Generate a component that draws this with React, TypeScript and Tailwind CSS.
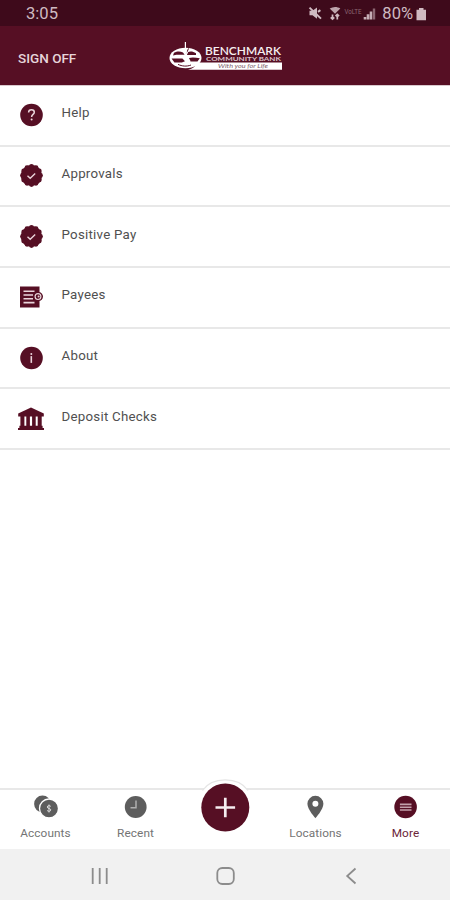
import type { ReactNode } from "react";

const MAROON = "#560f24";

function HelpIcon() {
  return (
    <svg width="28" height="28" viewBox="0 0 28 28" fill="none">
      <circle cx="14.5" cy="14" r="11.3" fill={MAROON} />
      <path d="M11.6 11.4c0-1.8 1.2-2.7 2.9-2.7s2.8 1 2.8 2.5c0 2.2-2.7 2.2-2.7 4.7" stroke="#ead5db" strokeWidth="1.5" />
      <circle cx="14.6" cy="18.4" r="1" fill="#ead5db" />
    </svg>
  );
}

function SealIcon() {
  // round badge with twelve bumps
  const bumps = Array.from({ length: 12 }, (_, i) => (i * Math.PI) / 6);
  return (
    <svg width="28" height="28" viewBox="0 0 28 28" fill="none">
      <circle cx="14.5" cy="13.5" r="10.6" fill={MAROON} />
      {bumps.map((a) => (
        <circle key={a} cx={14.5 + 9 * Math.sin(a)} cy={13.5 - 9 * Math.cos(a)} r="2.4" fill={MAROON} />
      ))}
      <path d="M10.5 13.7l2.7 2.5 5-4.8" stroke="#ead5db" strokeWidth="1.4" />
    </svg>
  );
}

function PayeesIcon() {
  return (
    <svg width="28" height="28" viewBox="0 0 28 28" fill="none">
      <path d="M3 3.5h19.5v21H3z" fill={MAROON} />
      <path d="M6.5 8.2h11M6.5 12h9.5M6.5 15.8h9.5M6.5 19.6h11" stroke="#ead5db" strokeWidth="1.6" />
      <circle cx="21.5" cy="13.6" r="4.5" fill={MAROON} />
      <circle cx="21" cy="13.6" r="2.9" stroke="#ead5db" strokeWidth="1.2" />
      <circle cx="21.6" cy="13.6" r="1" fill="#ead5db" />
    </svg>
  );
}

function AboutIcon() {
  return (
    <svg width="28" height="28" viewBox="0 0 28 28" fill="none">
      <circle cx="14.5" cy="14" r="11.3" fill={MAROON} />
      <circle cx="14.3" cy="10.1" r="1" fill="#ead5db" />
      <path d="M14.3 12.1v6.8" stroke="#ead5db" strokeWidth="1.6" />
    </svg>
  );
}

function BankIcon() {
  return (
    <svg width="28" height="28" viewBox="0 0 28 28" fill={MAROON}>
      <path d="M14 2.6L26.8 8.6v2.9H1.2V8.6z" />
      <path d="M3.4 11h4v10.5h-4zM9.3 11h3.6v10.5H9.3zM15.1 11h3.6v10.5h-3.6zM20.7 11h4v10.5h-4z" />
      <path d="M2.4 20.8h23.2V25H2.4zM1 23h26v2H1z" />
    </svg>
  );
}

function Logo() {
  return (
    <svg width="118" height="32" viewBox="0 0 118 32" fill="none">
      <ellipse cx="19.500" cy="18" rx="16" ry="10.300" fill="#fff" />
      <path d="M8 12.8c3.500-1.800 6.500-1.200 9-.4l1.600 2.400h-8.200L7 15.600zM21.500 12.200c3-1.300 5.500-.8 8.500 1V15h-9zM5.600 18.400h10.800l2.600 2.800-3.200 1.400H8.400zM23 18c3.500-1.200 7-.3 10.800.2l-2.300 3.200h-7z" fill={MAROON} />
      <path d="M12 24.400c4 1.800 8.500 2.400 13 .6M22.500 8.400l-2.200 5.400" stroke={MAROON} strokeWidth="1" />
      <path d="M19.400 2v9.500M15.800 9l5.500 3.500-2.600 4.600 5.300 4" stroke="#fff" strokeWidth="1.200" />
      <text x="39" y="14.800" textLength="76" lengthAdjust="spacingAndGlyphs" fill="#f7eff1" fontFamily="Lato, sans-serif" fontWeight="600" fontSize="11.500">BENCHMARK</text>
      <text x="40" y="21.400" textLength="75" lengthAdjust="spacingAndGlyphs" fill="#dcc5cc" fontFamily="Lato, sans-serif" fontWeight="700" fontSize="6">COMMUNITY BANK</text>
      <path d="M31 22.400h85v7.300H22c5-1.200 7.500-3.300 9-7.300z" fill="#fff" />
      <text x="52" y="28.300" textLength="50" lengthAdjust="spacingAndGlyphs" fill="#80606b" fontFamily="Lato, sans-serif" fontStyle="italic" fontSize="5.600">With you for Life</text>
    </svg>
  );
}

function StatusIcons() {
  return (
    <svg width="72" height="18" viewBox="0 0 72 18" fill="none">
      <path d="M2.500 6.800h3L10 3.500v11.200l-4.500-3.400h-3z" fill="#d0bac1" />
      <path d="M2.500 3.600l11.500 11M11 7.800l2.400-1.600" stroke="#d0bac1" strokeWidth="2" />
      <path d="M22.700 4.400c3.500-2 7.400-2 10.600 0L28 9.800z" fill="#bda4ac" />
      <path d="M25.500 15.500v-5M23.700 13.300l1.800 1.700 1.800-1.700M30.300 10.400v5M28.500 12.200l1.800-1.700 1.800 1.700" stroke="#d0bac1" strokeWidth="1.700" />
      <text x="37.500" y="9.600" textLength="17" lengthAdjust="spacingAndGlyphs" fill="#8c6672" fontFamily="Roboto, sans-serif" fontSize="7.500">VoLTE</text>
      <path d="M56.700 15.500v-2.600h2.600v2.600zM59.700 15.500v-5.200h2.600v5.200zM62.700 15.500v-8h2.600v8z" fill="#c5adb5" />
      <path d="M65.800 15.500v-11h2.400v11z" fill="#8c6672" />
    </svg>
  );
}

interface MenuItem {
  label: string;
  icon: ReactNode;
}

const menu: MenuItem[] = [
  { label: "Help", icon: <HelpIcon /> },
  { label: "Approvals", icon: <SealIcon /> },
  { label: "Positive Pay", icon: <SealIcon /> },
  { label: "Payees", icon: <PayeesIcon /> },
  { label: "About", icon: <AboutIcon /> },
  { label: "Deposit Checks", icon: <BankIcon /> },
];

function AccountsIcon() {
  return (
    <svg width="28" height="26" viewBox="0 0 28 26" fill="none">
      <circle cx="11.500" cy="10" r="8.400" fill="#5d5d5d" />
      <circle cx="18" cy="14.500" r="9.500" fill="#5d5d5d" stroke="#fff" strokeWidth="1.300" />
      <path d="M19.800 12.400c-1-1.100-3.500-1-3.500.6 0 2 3.500 1.100 3.500 2.900 0 1.600-2.600 1.800-3.700.6M18 10.500v8" stroke="#dcdcdc" strokeWidth="1" />
    </svg>
  );
}

function RecentIcon() {
  return (
    <svg width="28" height="26" viewBox="0 0 28 26" fill="none">
      <circle cx="14.700" cy="13" r="10.900" fill="#5d5d5d" />
      <path d="M15 6.500v7.200H9.500" stroke="#b0b0b0" strokeWidth="1.500" />
    </svg>
  );
}

function PinIcon() {
  return (
    <svg width="28" height="26" viewBox="0 0 28 26">
      <path fillRule="evenodd" d="M14.400 1.800a8 8 0 0 0-8 8c0 5.800 8 14.400 8 14.400s8-8.600 8-14.400a8 8 0 0 0-8-8zm0 10.900a3 3 0 1 1 0-6 3 3 0 0 1 0 6z" fill="#5d5d5d" />
    </svg>
  );
}

function MoreIcon() {
  return (
    <svg width="28" height="26" viewBox="0 0 28 26" fill="none">
      <circle cx="14.600" cy="13" r="11.300" fill={MAROON} />
      <path d="M8.900 10.400h11.600M8.900 13.200h11.600M8.900 16h11.600" stroke="#c3a1ab" strokeWidth="1.600" />
    </svg>
  );
}

function Tab({ label, icon, active }: { label: string; icon: ReactNode; active?: boolean }) {
  return (
    <div className="flex w-[90px] flex-col items-center pt-1">
      {icon}
      <span className={`mt-[5px] pl-px text-[11.8px] leading-4 tracking-[0.1px] ${active ? "text-[#6b2439]" : "text-[#747474]"}`}>
        {label}
      </span>
    </div>
  );
}

export default function App() {
  return (
    <div className="flex h-[900px] w-[450px] flex-col overflow-hidden bg-white font-['Roboto',sans-serif]">
      <div className="flex h-[26px] items-center bg-[#3e0a1b] pr-[23px] pl-[26px] text-[#cfbac1]">
        <span className="pt-px text-[16.6px] leading-5">3:05</span>
        <div className="ml-auto flex items-center">
          <StatusIcons />
          <span className="ml-[3px] pt-[2px] text-[16.5px] leading-5">80%</span>
          <svg className="mt-0.5 ml-[2px]" width="12" height="14" viewBox="0 0 12 14" fill="#d0bac1">
            <path d="M4 1h4.500v1.800H11v10.400H1.500V2.800H4z" />
          </svg>
        </div>
      </div>

      <header className="grid h-[60px] grid-cols-[1fr_118px_1fr] items-center border-b border-[#d9c9ce] bg-[#560f24]">
        <span className="pt-[5px] pl-[18px] text-[13.5px] font-medium text-[#e6d5da]">SIGN OFF</span>
        <Logo />
      </header>

      <main className="flex-1">
        {menu.map((item) => (
          <div
            key={item.label}
            className="flex h-[60.7px] items-center border-b-2 border-[#e8e8e8] pl-[16.5px]"
          >
            {item.icon}
            <span className="ml-[17px] pb-1 text-[13.3px] tracking-[0.25px] text-[#505050]">{item.label}</span>
          </div>
        ))}
      </main>

      <nav className="relative flex h-[61px] border-t-2 border-[#e8e8e8] bg-white">
        <Tab label="Accounts" icon={<AccountsIcon />} />
        <Tab label="Recent" icon={<RecentIcon />} />
        <div className="w-[90px]" />
        <Tab label="Locations" icon={<PinIcon />} />
        <Tab label="More" icon={<MoreIcon />} active />
        <svg className="absolute -top-[11px] left-[197px]" width="56" height="58" viewBox="0 0 56 58" fill="none">
          <path d="M5.500 11.500C10 5 18 .9 28.300.9S46.500 5 51 11.500" fill="#fff" stroke="#e5e5e5" strokeWidth="1.300" />
          <circle cx="28.300" cy="28.500" r="24" fill={MAROON} />
          <path d="M18.500 28.500h19.600M28.300 18.700v19.600" stroke="#f6edf0" strokeWidth="2.700" />
        </svg>
      </nav>

      <div className="flex h-[51px] items-center bg-[#f1f1f1]">
        <svg width="450" height="50" viewBox="0 0 450 50" fill="none" stroke="#8c8c8c" strokeWidth="1.800">
          <path d="M92.700 18v16M99.700 18v16M106.700 18v16" />
          <rect x="217.300" y="18" width="16.500" height="16" rx="5" />
          <path d="M355.500 18.500l-8.300 7.500 8.300 7.500" />
        </svg>
      </div>
    </div>
  );
}
